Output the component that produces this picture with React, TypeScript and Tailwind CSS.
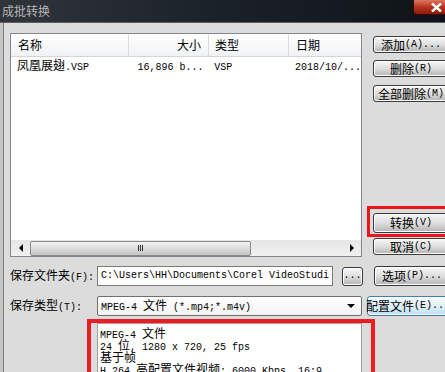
import React from "react";

const wide = /[\u2e80-\u9fff\u3000-\u303f\uff00-\uffef]/;

// mixed text: CJK at 12px, latin in a 6px-wide mono like the SimSun half-width glyphs
function T({ s }: { s: string }) {
  const runs: { w: boolean; t: string }[] = [];
  for (const ch of s) {
    const w = wide.test(ch);
    const last = runs[runs.length - 1];
    if (last && last.w === w) last.t += ch;
    else runs.push({ w, t: ch });
  }
  return (
    <>
      {runs.map((r, i) => (
        <span
          key={i}
          className={
            r.w
              ? "font-['Noto_Sans_CJK_SC',sans-serif] text-[12px]"
              : "font-['Liberation_Mono',monospace] text-[10px]"
          }
        >
          {r.t}
        </span>
      ))}
    </>
  );
}

const Btn = ({ label, className = "" }: { label: string; className?: string }) => (
  <div
    className={`flex shrink-0 items-center justify-center whitespace-pre rounded-[3px] border border-[#3a3a3a] bg-linear-to-b from-[#f7f7f7] via-[#dedede] to-[#b4b4b4] leading-[12px] text-black shadow-[inset_0_0_0_1px_#ffffff] ${className}`}
  >
    <T s={label} />
  </div>
);

const Header = () => (
  <div className="flex h-[23px] shrink-0 border-b border-[#d5d5d5] bg-linear-to-b from-[#ffffff] to-[#f1f2f4] leading-[12px] text-black">
    <div className="flex w-[118px] items-center border-r border-[#dcdcdc] pl-[7px]">
      <T s="名称" />
    </div>
    <div className="flex w-[80px] items-center justify-end border-r border-[#dcdcdc] pr-[7px]">
      <T s="大小" />
    </div>
    <div className="flex w-[80px] items-center border-r border-[#dcdcdc] pl-[6px]">
      <T s="类型" />
    </div>
    <div className="flex flex-1 items-center pl-[7px]">
      <T s="日期" />
    </div>
  </div>
);

const Row = () => (
  <div className="flex h-[17px] items-center whitespace-pre leading-[12px] text-black">
    <div className="w-[118px] pl-[6px]">
      <T s="凤凰展翅.VSP" />
    </div>
    <div className="w-[80px] pl-[9px]">
      <T s="16,896 b..." />
    </div>
    <div className="w-[80px] pl-[6px]">
      <T s="VSP" />
    </div>
    <div className="flex-1 pl-[7px]">
      <T s="2018/10/..." />
    </div>
  </div>
);

const HScroll = () => (
  <div className="flex h-[16px] shrink-0 items-center bg-linear-to-b from-[#e6e6e6] to-[#f0f0f0]">
    <div className="flex w-[19px] items-center justify-center">
      <div className="h-0 w-0 border-y-[4px] border-r-[4px] border-y-transparent border-r-black" />
    </div>
    <div className="flex h-[15px] w-[221px] items-center justify-center rounded-[2px] border border-[#8a8a8a] bg-linear-to-b from-[#f2f2f2] via-[#dcdcdc] to-[#c4c4c4]">
      <div className="flex gap-[1px]">
        <div className="h-[6px] w-[1px] bg-[#333]" />
        <div className="h-[6px] w-[1px] bg-[#333]" />
        <div className="h-[6px] w-[1px] bg-[#333]" />
      </div>
    </div>
    <div className="flex-1" />
    <div className="flex w-[19px] items-center justify-center">
      <div className="h-0 w-0 border-y-[4px] border-l-[4px] border-y-transparent border-l-black" />
    </div>
  </div>
);

export default function App() {
  return (
    <div className="flex h-[372px] w-[445px] flex-col overflow-hidden bg-[#dcdcdc]">
      {/* title bar */}
      <div className="flex h-[22px] shrink-0 bg-linear-to-r from-[#30353a] via-[#1b2129] to-[#0f1317]">
        <div className="flex-1 pl-[2px] pt-[3px] leading-[14px] text-[#b4b4b4]">
          <T s="成批转换" />
        </div>
        <div className="-mr-[14px] flex h-[15px] w-[46px] shrink-0 items-center justify-center rounded-bl-[4px] border border-t-0 border-[#3a0a06] bg-linear-to-b from-[#d9775f] via-[#b8321d] to-[#8c1b0c]">
          <svg width="11" height="9" viewBox="0 0 11 9">
            <path d="M1 0.5 L10 8.5 M10 0.5 L1 8.5" stroke="#fff" strokeWidth="2.4" />
          </svg>
        </div>
      </div>

      {/* client */}
      <div className="flex flex-1 border-t border-[#5e5e5e]">
        <div className="w-[3px] shrink-0 bg-[#c6c6c6]" />
        <div className="flex flex-1 flex-col border-l border-[#7b7b7b] pl-[6px] pt-[10px]">
          <div className="flex items-start">
            <div className="flex h-[224px] w-[352px] flex-col border border-[#828790] bg-white">
              <Header />
              <Row />
              <div className="flex-1" />
              <HScroll />
            </div>
            <div className="ml-[11px] flex flex-col pt-[3px]">
              <Btn label="添加(A)..." className="h-[17px] w-[76px]" />
              <Btn label="删除(R)" className="mt-[7px] h-[17px] w-[76px]" />
              <Btn label="全部删除(M)" className="mt-[8px] h-[17px] w-[76px]" />
              {/* red highlight around the convert button */}
              <div className="-ml-[6px] mt-[104px] border-[3px] border-[#f0141c] pb-[1px] pl-[3px] pr-[3px] pt-[4px]">
                <Btn label="转换(V)" className="h-[20px] w-[76px]" />
              </div>
              <Btn label="取消(C)" className="mt-[1px] h-[17px] w-[76px]" />
            </div>
          </div>

          <div className="mt-[9px] flex items-center whitespace-pre leading-[12px] text-black">
            <div className="w-[87px]">
              <T s="保存文件夹(F):" />
            </div>
            <div className="flex h-[20px] w-[236px] items-center overflow-hidden border border-[#7a7a7a] bg-white pl-[3px]">
              <T s="C:\Users\HH\Documents\Corel VideoStudi" />
            </div>
            <Btn label="..." className="ml-[9px] h-[19px] w-[21px]" />
            <Btn label="选项(P)..." className="ml-[11px] h-[20px] w-[76px]" />
          </div>

          <div className="mt-[10px] flex items-center whitespace-pre leading-[12px] text-black">
            <div className="w-[87px]">
              <T s="保存类型(T):" />
            </div>
            <div className="flex h-[20px] w-[265px] items-center rounded-[2px] border border-[#6f6f6f] bg-linear-to-b from-[#ffffff] to-[#f2f2f2] pl-[3px] pr-[6px]">
              <div className="flex-1">
                <T s="MPEG-4 文件 (*.mp4;*.m4v)" />
              </div>
              <div className="h-0 w-0 border-x-[4px] border-t-[4px] border-x-transparent border-t-black" />
            </div>
            <div className="ml-[5px] flex h-[20px] w-[82px] shrink-0 items-center justify-center rounded-[3px] border border-[#3c7fb1] bg-linear-to-b from-[#f4fafd] via-[#e0f0fa] to-[#c2dff0] leading-[12px] shadow-[inset_0_0_0_1px_#ffffff]">
              <T s="配置文件(E)..." />
            </div>
          </div>

          <div className="ml-[77px] mt-[3px] flex w-[288px] flex-1 border-[4px] border-b-0 border-[#ee1d23] pl-[6px] pr-[9px]">
            <div className="flex flex-1 flex-col whitespace-pre border border-b-0 border-[#a0a0a0] bg-white pl-[2px] pt-[2px] leading-[12px] text-black">
              <div className="h-[12px]"><T s="MPEG-4 文件" /></div>
              <div className="h-[12px]"><T s="24 位, 1280 x 720, 25 fps" /></div>
              <div className="h-[12px]"><T s="基于帧" /></div>
              <div className="h-[12px]"><T s="H.264 高配置文件视频: 6000 Kbps, 16:9" /></div>
            </div>
          </div>
        </div>
      </div>
    </div>
  );
}
